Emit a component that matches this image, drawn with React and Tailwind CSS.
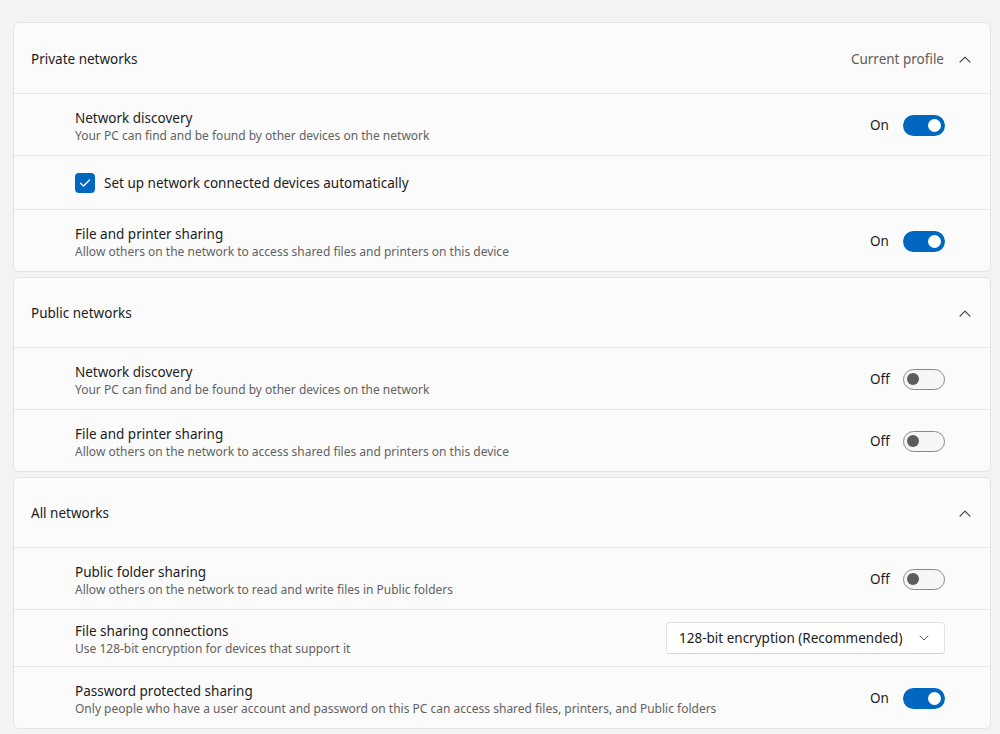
import React from "react";

const font = { fontFamily: '"Noto Sans", "Liberation Sans", sans-serif' };

function ChevronUp() {
  return (
    <svg width="12" height="7" viewBox="0 0 12 7" fill="none">
      <path d="M1 6.2 L6 1.2 L11 6.2" stroke="#3a3a3a" strokeWidth="1.1" strokeLinecap="round" strokeLinejoin="round" />
    </svg>
  );
}

function ChevronDown() {
  return (
    <svg width="10" height="6" viewBox="0 0 10 6" fill="none">
      <path d="M1 1 L5 5 L9 1" stroke="#5a5a5a" strokeWidth="1" strokeLinecap="round" strokeLinejoin="round" />
    </svg>
  );
}

function Toggle({ on }) {
  return (
    <div className="flex items-center pt-[1px]">
      <span className="text-[13.5px] text-[#1b1b1b] w-[33px] pt-[1px]">{on ? "On" : "Off"}</span>
      {on ? (
        <div className="w-[42px] h-[21px] rounded-full bg-[#0067c0] flex items-center justify-end pr-[4px]">
          <div className="w-[13px] h-[13px] rounded-full bg-white" />
        </div>
      ) : (
        <div className="w-[42px] h-[21px] rounded-full bg-[#f6f6f6] border border-[#8a8a8a] flex items-center pl-[3px]">
          <div className="w-[12px] h-[12px] rounded-full bg-[#5c5c5c]" />
        </div>
      )}
    </div>
  );
}

function Header({ title, right, h = "h-[69px]" }) {
  return (
    <div className={`${h} flex items-center pl-[17px] pr-[19px] pt-[2px]`}>
      <span className="text-[13.5px] text-[#1b1b1b] flex-1">{title}</span>
      {right && <span className="text-[13.5px] text-[#5d5d5d] mr-[15px]">{right}</span>}
      <ChevronUp />
    </div>
  );
}

function Row({ title, sub, control, h = "h-[62px]" }) {
  return (
    <div className={`${h} border-t border-[#e8e8e8] flex items-center pl-[61px] pr-[45px]`}>
      <div className="flex-1 flex flex-col pt-[2px]">
        <span className="text-[13.5px] leading-[20px] text-[#1b1b1b]">{title}</span>
        <span className="text-[12px] leading-[16px] text-[#626262]">{sub}</span>
      </div>
      {control}
    </div>
  );
}

function Card({ children }) {
  return (
    <div className="bg-[#fbfbfb] border border-[#e5e5e5] rounded-[6px] flex flex-col">{children}</div>
  );
}

export default function App() {
  return (
    <div style={font} className="w-[1000px] h-[734px] bg-[#f3f3f3] pt-[22px] pl-[13px] pr-[9px] flex flex-col gap-[5px] overflow-hidden">
      <Card>
        <Header title="Private networks" right="Current profile" h="h-[70px]" />
        <Row title="Network discovery" sub="Your PC can find and be found by other devices on the network" control={<Toggle on />} />
        <div className="h-[54px] border-t border-[#e8e8e8] flex items-center pl-[61px] pt-[1px]">
          <div className="w-[20px] h-[20px] rounded-[4px] bg-[#0067c0] flex items-center justify-center">
            <svg width="12" height="10" viewBox="0 0 12 10" fill="none">
              <path d="M1.5 5.2 L4.5 8 L10.5 2" stroke="white" strokeWidth="1.3" strokeLinecap="round" strokeLinejoin="round" />
            </svg>
          </div>
          <span className="ml-[9px] text-[13.5px] text-[#1b1b1b] pt-[1px]">Set up network connected devices automatically</span>
        </div>
        <Row title="File and printer sharing" sub="Allow others on the network to access shared files and printers on this device" control={<Toggle on />} />
      </Card>
      <Card>
        <Header title="Public networks" />
        <Row title="Network discovery" sub="Your PC can find and be found by other devices on the network" control={<Toggle on={false} />} />
        <Row title="File and printer sharing" sub="Allow others on the network to access shared files and printers on this device" control={<Toggle on={false} />} />
      </Card>
      <Card>
        <Header title="All networks" />
        <Row title="Public folder sharing" sub="Allow others on the network to read and write files in Public folders" control={<Toggle on={false} />} />
        <Row
          h="h-[57px]"
          title="File sharing connections"
          sub="Use 128-bit encryption for devices that support it"
          control={
            <div className="w-[279px] h-[32px] bg-white border border-[#e3e3e3] border-b-[#d4d4d4] rounded-[4px] flex items-center pl-[12px] pr-[15px]">
              <span className="flex-1 text-[13.5px] text-[#1b1b1b]">128-bit encryption (Recommended)</span>
              <ChevronDown />
            </div>
          }
        />
        <Row title="Password protected sharing" sub="Only people who have a user account and password on this PC can access shared files, printers, and Public folders" control={<Toggle on />} />
      </Card>
    </div>
  );
}
